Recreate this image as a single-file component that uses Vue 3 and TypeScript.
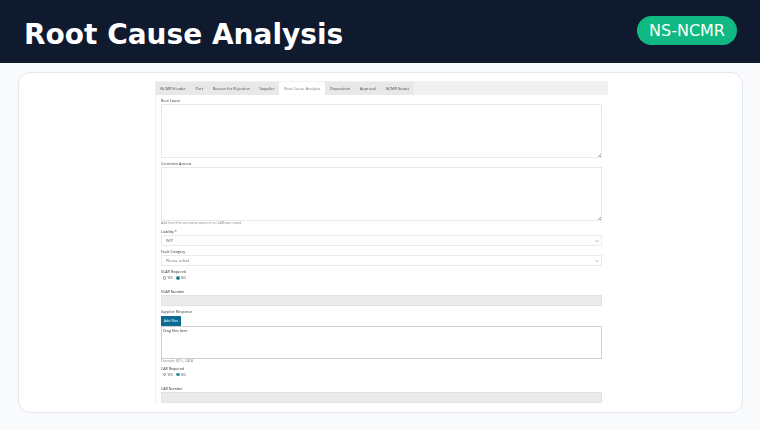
<script setup lang="ts">
const tabs = [
  "NCMR Header",
  "Part",
  "Reason for Rejection",
  "Supplier",
  "Root Cause Analysis",
  "Disposition",
  "Approval",
  "NCMR Status",
];
const activeTab = "Root Cause Analysis";
</script>

<template>
  <div class="page">
    <header class="topbar">
      <h1 class="title">Root Cause Analysis</h1>
      <span class="badge">NS-NCMR</span>
    </header>

    <main class="content">
      <section class="card">
        <div class="sheet">
          <nav class="tabs">
            <span
              v-for="tab in tabs"
              :key="tab"
              class="tab"
              :class="{ 'tab--active': tab === activeTab }"
            >{{ tab }}</span>
          </nav>

          <form class="form">
            <label class="label label--first">Root Cause</label>
            <textarea class="area"></textarea>

            <label class="label label--area">Corrective Actions</label>
            <textarea class="area"></textarea>
            <p class="hint">Add here the corrective action if no CAR was raised</p>

            <label class="label label--liability">Liability *</label>
            <div class="select">
              <span>WIP</span>
              <svg class="chevron" viewBox="0 0 8 8"><path d="M1 2.5 4 5.5 7 2.5" /></svg>
            </div>

            <label class="label label--select">Fault Category</label>
            <div class="select">
              <span>Please select</span>
              <svg class="chevron" viewBox="0 0 8 8"><path d="M1 2.5 4 5.5 7 2.5" /></svg>
            </div>

            <label class="label label--select">SCAR Required</label>
            <div class="radios">
              <span class="radio"></span><span>YES</span>
              <span class="radio radio--on"></span><span>NO</span>
            </div>

            <label class="label label--number">SCAR Number</label>
            <div class="locked"></div>

            <label class="label label--supplier">Supplier Response</label>
            <button type="button" class="add">Add files</button>
            <div class="drop">Drag files here</div>
            <p class="hint">Example: 8D's, CAPA</p>

            <label class="label label--car">CAR Required</label>
            <div class="radios">
              <span class="radio"></span><span>YES</span>
              <span class="radio radio--on"></span><span>NO</span>
            </div>

            <label class="label label--number">CAR Number</label>
            <div class="locked"></div>
          </form>
        </div>
      </section>
    </main>
  </div>
</template>

<style scoped>
.page {
  width: 760px;
  height: 430px;
  overflow: hidden;
  background: #f8fafc;
  font-family: "Open Sans", "Liberation Sans", sans-serif;
}

.topbar {
  height: 63px;
  box-sizing: border-box;
  padding: 0 23px 0 24px;
  display: flex;
  align-items: center;
  justify-content: space-between;
  background: #0f1a2e;
}

.title {
  margin: 6px 0 0;
  color: #fff;
  font: 700 28px "DejaVu Sans", sans-serif;
}

.badge {
  width: 100px;
  height: 29px;
  margin-bottom: 3px;
  border-radius: 15px;
  display: flex;
  align-items: center;
  justify-content: center;
  background: #10b981;
  color: #fff;
  font: 400 16px "DejaVu Sans", sans-serif;
}

.content {
  padding: 9px 17px 0 18px;
}

.card {
  height: 341px;
  box-sizing: border-box;
  padding-top: 8px;
  border: 1px solid #e2e8f0;
  border-radius: 12px;
  background: #fff;
  display: flex;
  justify-content: center;
  overflow: hidden;
}

.sheet {
  width: 453px;
  height: 323px;
  box-sizing: border-box;
  margin-left: 1px;
  border-left: 1px solid #f0f0f0;
  filter: blur(0.25px);
}

.tabs {
  height: 14px;
  box-sizing: border-box;
  padding-top: 1px;
  display: flex;
  background: #f1f1f1;
}

.tab {
  padding: 0 4.8px;
  display: flex;
  align-items: center;
  background: #e8e8e8;
  color: #4a4a4a;
  font-size: 3.9px;
  white-space: nowrap;
}

.tab--active {
  background: #fff;
  color: #777;
}

.form {
  padding: 0 5.5px;
  display: flex;
  flex-direction: column;
  align-items: stretch;
}

.label {
  height: 5px;
  line-height: 5px;
  color: #333;
  font-size: 3.6px;
}

.label--first {
  margin-top: 3px;
  margin-bottom: 1px;
}

.label--area {
  margin-top: 3px;
  margin-bottom: 1px;
}

.label--liability {
  margin-top: 3px;
  margin-bottom: 1px;
}

.label--select {
  margin-top: 3px;
  margin-bottom: 1px;
}

.label--supplier {
  margin-top: 2.5px;
  margin-bottom: 2px;
}

.label--number {
  margin-top: 8.5px;
  margin-bottom: 1px;
}

.label--car {
  margin-top: 2px;
  margin-bottom: 1px;
}

.area {
  display: block;
  height: 54px;
  box-sizing: border-box;
  margin: 0;
  padding: 0;
  border: 1px solid #e9e9e9;
  background:
    linear-gradient(135deg, transparent 55%, #999 55%, #999 65%, transparent 65%, transparent 78%, #999 78%) right bottom / 4px 4px no-repeat,
    #fff;
  resize: none;
  outline: none;
}

.hint {
  margin: 0;
  height: 5px;
  line-height: 4px;
  color: #888;
  font-size: 3.4px;
}

.select {
  height: 11px;
  box-sizing: border-box;
  padding: 0 2px 0 4px;
  display: flex;
  align-items: center;
  justify-content: space-between;
  border: 1px solid #ebebeb;
  color: #666;
  font-size: 3.9px;
}

.chevron {
  width: 4px;
  height: 4px;
  fill: none;
  stroke: #777;
  stroke-width: 1.2;
}

.radios {
  height: 5px;
  margin-top: 0.5px;
  padding-left: 1.5px;
  display: flex;
  align-items: center;
  gap: 1.5px;
  color: #555;
  font-size: 3.2px;
}

.radio {
  width: 3.4px;
  height: 3.4px;
  box-sizing: border-box;
  border: 0.5px solid #888;
  border-radius: 50%;
  background: #fff;
}

.radio--on {
  margin-left: 2px;
  border-color: #3b8b96;
  background: #16808f;
}

.locked {
  height: 11px;
  box-sizing: border-box;
  border: 1px solid #e2e2e2;
  background: #ebebeb;
}

.add {
  width: 20px;
  height: 10px;
  padding: 0;
  border: 0;
  background: #0b6a94;
  color: #fff;
  font: 3.6px "Open Sans", sans-serif;
}

.drop {
  height: 33px;
  box-sizing: border-box;
  padding: 1px;
  border: 1px solid #cfcfcf;
  background: #fff;
  color: #333;
  font-size: 3.6px;
  line-height: 5px;
}
</style>

<style>
html,
body {
  margin: 0;
}
</style>
